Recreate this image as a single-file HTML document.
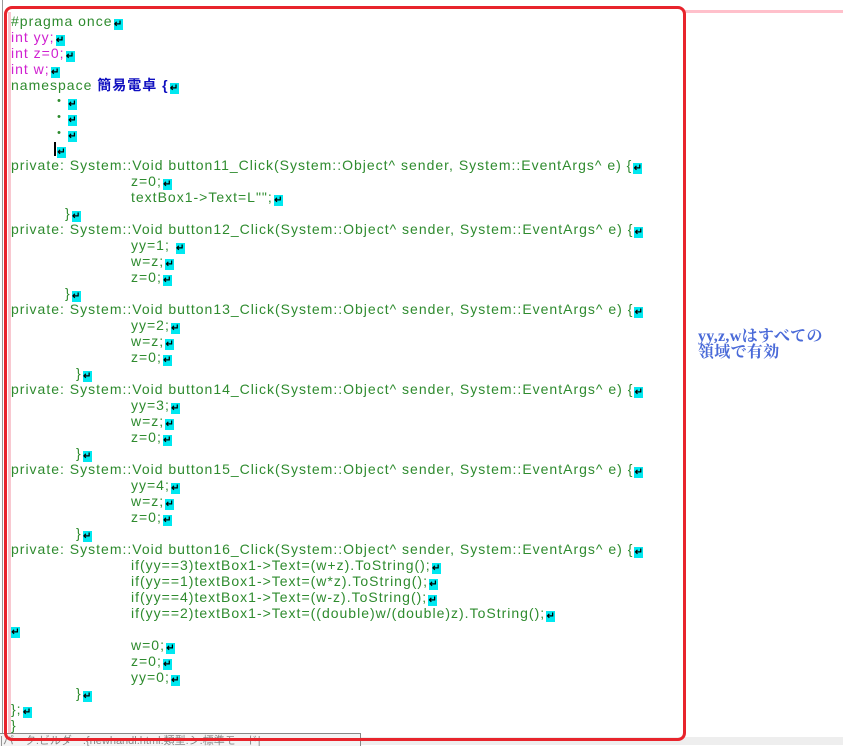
<!DOCTYPE html>
<html><head><meta charset="utf-8"><style>
body{margin:0;width:843px;height:745px;background:#fff;position:relative;overflow:hidden;font-family:"Liberation Sans","Noto Sans CJK JP",sans-serif;}
.l{position:absolute;white-space:pre;font-size:14px;letter-spacing:1px;line-height:16px;color:#2e8b2e;height:16px}
.m{color:#d020d0}
.b{color:#1010c0;font-weight:bold}
.r{display:inline-block;width:9px;height:11px;background:#00e8f0;color:#000;font-size:10px;line-height:11px;font-weight:bold;letter-spacing:0;vertical-align:-1px;text-align:center;margin-left:1px}
</style></head><body>
<div style="position:absolute;left:685px;top:10px;width:158px;height:3px;background:#ffc0cb"></div>
<div style="position:absolute;left:2px;top:0;width:1px;height:740px;background:#999"></div>
<div style="position:absolute;left:8px;top:12px;width:3px;height:722px;background:#f8c8d0"></div>
<div style="position:absolute;left:0;top:737px;width:843px;height:8px;background:#eee"></div>
<div style="position:absolute;left:0;top:733px;width:360px;height:12px;border-top:1px solid #888;border-right:1px solid #888;background:#f4f4f4;font-size:11px;color:#888;line-height:14px;overflow:hidden;white-space:nowrap">|パーク:ビルダー:{newhandl.html:類型:シ:標準モード|</div>
<div style="position:absolute;left:4px;top:6px;width:676px;height:729px;border:3px solid #e8242c;border-radius:8px"></div>

<div class="l" style="left:11px;top:13px">#pragma once<span class="r">↵</span></div>
<div class="l m" style="left:11px;top:29px">int yy;<span class="r">↵</span></div>
<div class="l m" style="left:11px;top:45px">int z=0;<span class="r">↵</span></div>
<div class="l m" style="left:11px;top:61px">int w;<span class="r">↵</span></div>
<div class="l" style="left:11px;top:77px">namespace <span class="b">簡易電卓 {</span><span class="r">↵</span></div>
<div class="l" style="left:52px;top:93px">・<span class="r">↵</span></div>
<div class="l" style="left:52px;top:109px">・<span class="r">↵</span></div>
<div class="l" style="left:52px;top:125px">・<span class="r">↵</span></div>
<div class="l" style="left:54px;top:141px"><span style="display:inline-block;width:2px;height:14px;background:#000;vertical-align:-2px"></span><span class="r">↵</span></div>

<div class="l" style="left:11px;top:157px">private: System::Void button11_Click(System::Object^ sender, System::EventArgs^ e) {<span class="r">↵</span></div>
<div class="l" style="left:131px;top:173px">z=0;<span class="r">↵</span></div>
<div class="l" style="left:131px;top:189px">textBox1-&gt;Text=L"";<span class="r">↵</span></div>
<div class="l" style="left:65px;top:205px">}<span class="r">↵</span></div>

<div class="l" style="left:11px;top:221px">private: System::Void button12_Click(System::Object^ sender, System::EventArgs^ e) {<span class="r">↵</span></div>
<div class="l" style="left:131px;top:237px">yy=1; <span class="r">↵</span></div>
<div class="l" style="left:131px;top:253px">w=z;<span class="r">↵</span></div>
<div class="l" style="left:131px;top:269px">z=0;<span class="r">↵</span></div>
<div class="l" style="left:65px;top:285px">}<span class="r">↵</span></div>

<div class="l" style="left:11px;top:301px">private: System::Void button13_Click(System::Object^ sender, System::EventArgs^ e) {<span class="r">↵</span></div>
<div class="l" style="left:131px;top:317px">yy=2;<span class="r">↵</span></div>
<div class="l" style="left:131px;top:333px">w=z;<span class="r">↵</span></div>
<div class="l" style="left:131px;top:349px">z=0;<span class="r">↵</span></div>
<div class="l" style="left:76px;top:365px">}<span class="r">↵</span></div>

<div class="l" style="left:11px;top:381px">private: System::Void button14_Click(System::Object^ sender, System::EventArgs^ e) {<span class="r">↵</span></div>
<div class="l" style="left:131px;top:397px">yy=3;<span class="r">↵</span></div>
<div class="l" style="left:131px;top:413px">w=z;<span class="r">↵</span></div>
<div class="l" style="left:131px;top:429px">z=0;<span class="r">↵</span></div>
<div class="l" style="left:76px;top:445px">}<span class="r">↵</span></div>

<div class="l" style="left:11px;top:461px">private: System::Void button15_Click(System::Object^ sender, System::EventArgs^ e) {<span class="r">↵</span></div>
<div class="l" style="left:131px;top:477px">yy=4;<span class="r">↵</span></div>
<div class="l" style="left:131px;top:493px">w=z;<span class="r">↵</span></div>
<div class="l" style="left:131px;top:509px">z=0;<span class="r">↵</span></div>
<div class="l" style="left:76px;top:525px">}<span class="r">↵</span></div>

<div class="l" style="left:11px;top:541px">private: System::Void button16_Click(System::Object^ sender, System::EventArgs^ e) {<span class="r">↵</span></div>
<div class="l" style="left:131px;top:557px">if(yy==3)textBox1-&gt;Text=(w+z).ToString();<span class="r">↵</span></div>
<div class="l" style="left:131px;top:573px">if(yy==1)textBox1-&gt;Text=(w*z).ToString();<span class="r">↵</span></div>
<div class="l" style="left:131px;top:589px">if(yy==4)textBox1-&gt;Text=(w-z).ToString();<span class="r">↵</span></div>
<div class="l" style="left:131px;top:605px">if(yy==2)textBox1-&gt;Text=((double)w/(double)z).ToString();<span class="r">↵</span></div>
<div class="l" style="left:10px;top:621px"><span class="r">↵</span></div>
<div class="l" style="left:131px;top:637px">w=0;<span class="r">↵</span></div>
<div class="l" style="left:131px;top:653px">z=0;<span class="r">↵</span></div>
<div class="l" style="left:131px;top:669px">yy=0;<span class="r">↵</span></div>
<div class="l" style="left:76px;top:685px">}<span class="r">↵</span></div>
<div class="l" style="left:11px;top:701px">};<span class="r">↵</span></div>
<div class="l" style="left:11px;top:717px">}</div>

<div style="position:absolute;left:698px;top:329px;font-family:'Liberation Serif','Noto Serif CJK SC',serif;font-size:16px;line-height:16px;color:#4a6ad8;white-space:nowrap;font-weight:bold;letter-spacing:0.3px">yy,z,wはすべての<br>領域で有効</div>
</body></html>
